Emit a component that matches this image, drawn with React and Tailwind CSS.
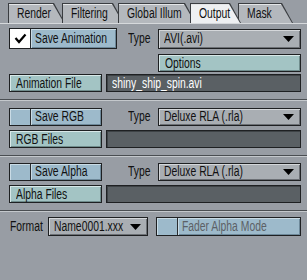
import React from "react";

const font = { fontFamily: '"Liberation Sans", Arial, sans-serif' };

function T({ children }) {
  return <span className="inline-block origin-left scale-x-[0.74] whitespace-nowrap">{children}</span>;
}

function Tab({ label, className, active }) {
  return (
    <div className={`relative h-[20px] shrink-0 ${className} ${active ? "z-10" : ""}`}>
      <div className="absolute inset-0 bg-[#3a3d41] [clip-path:polygon(0_0,calc(100%-11px)_0,100%_100%,0_100%)]" />
      <div
        className={`absolute left-[1px] top-[1px] right-[1px] bottom-0 ${
          active ? "bg-[#eef0f2]" : "bg-[#b4b8bd]"
        } [clip-path:polygon(0_0,calc(100%-11px)_0,100%_100%,0_100%)]`}
      />
      <div className="absolute left-[1px] top-[1px] right-[12px] h-[1px] bg-[#e4e6e8]" />
      <div className="relative pl-[9px] pt-[1px] text-[14px] leading-[19px] text-[#111]">
        <T>{label}</T>
      </div>
    </div>
  );
}

function Sep() {
  return (
    <div className="flex flex-col">
      <div className="h-[1px] bg-[#4a4e52]" />
      <div className="h-[1px] bg-[#c4c8cc]" />
    </div>
  );
}

function TealBtn({ children, className = "" }) {
  return (
    <div
      className={`flex items-center border border-[#1e2022] bg-[#a3c4c4] shadow-[inset_1px_1px_0_#d8e8e8,inset_-1px_-1px_0_#6f8c8c] pl-[6px] text-[14px] text-[#111] ${className}`}
    >
      <T>{children}</T>
    </div>
  );
}

function Check({ label, checked, className = "", dim }) {
  return (
    <div className={`flex border border-[#1e2022] bg-[#9dbacb] ${className}`}>
      <div
        className={`w-[21px] shrink-0 border-r border-[#2a2d30] flex items-center justify-center ${
          checked ? "bg-white" : "bg-[#9dbacb] shadow-[inset_1px_1px_0_#c9dbe5]"
        }`}
      >
        {checked && (
          <svg width="13" height="11" viewBox="0 0 13 11">
            <path d="M1.5 5 L5 9 L11.5 1.5" fill="none" stroke="#000" strokeWidth="2.2" />
          </svg>
        )}
      </div>
      <div
        className={`flex-1 min-w-0 pl-[4px] flex items-center text-[14px] shadow-[inset_1px_1px_0_#c9dbe5,inset_-1px_-1px_0_#6d8899] ${
          dim ? "text-[#5c6166]" : "text-[#111]"
        }`}
      >
        <T>{label}</T>
      </div>
    </div>
  );
}

function Select({ value, className = "" }) {
  return (
    <div
      className={`flex items-center border border-[#1e2022] bg-[#a9aeb3] shadow-[inset_1px_1px_0_#d4d7da,inset_-1px_-1px_0_#6c7075] pl-[5px] pr-[6px] text-[14px] text-[#111] ${className}`}
    >
      <div className="flex-1 min-w-0 flex items-center">
        <T>{value}</T>
      </div>
      <svg width="11" height="6" viewBox="0 0 11 6" className="shrink-0">
        <path d="M0 0 H11 L5.5 6 Z" fill="#000" />
      </svg>
    </div>
  );
}

function Field({ value, className = "" }) {
  return (
    <div
      className={`flex items-center border border-[#1e2022] bg-[#5a6064] shadow-[inset_1px_1px_0_#3e4346] pl-[5px] text-[14px] text-white ${className}`}
    >
      <T>{value}</T>
    </div>
  );
}

function TypeRow({ check, value, h }) {
  return (
    <div className="flex items-center">
      {check}
      <span className="ml-auto w-[30px] text-[14px] text-[#111]">
        <T>Type</T>
      </span>
      <Select value={value} className={`w-[143px] ${h}`} />
    </div>
  );
}

export default function App() {
  return (
    <div className="w-[307px] h-[280px] bg-[#989da4] overflow-hidden" style={font}>
      {/* tabs */}
      <div className="relative h-[24px]">
        <div className="flex pt-[3px] pl-[8px]">
          <Tab label="Render" className="w-[57px]" />
          <Tab label="Filtering" className="w-[62px] ml-[-3px]" />
          <Tab label="Global Illum" className="w-[78px] ml-[-6px]" />
          <Tab label="Output" className="w-[51px] ml-[-6px]" active />
          <Tab label="Mask" className="w-[55px] ml-[-3px]" />
        </div>
        <div className="absolute left-0 right-0 top-[23px] h-[1px] bg-[#d6d9dc]" />
      </div>

      <div className="flex flex-col pl-[9px] pr-[6px]">
        <div className="mt-[4px]">
          <TypeRow
            check={<Check label="Save Animation" checked className="w-[108px] h-[21px]" />}
            value="AVI(.avi)"
            h="h-[20px]"
          />
        </div>
        <div className="mt-[5px] flex">
          <TealBtn className="ml-auto w-[143px] h-[18px]">Options</TealBtn>
        </div>
        <div className="mt-[2px] flex gap-[4px]">
          <TealBtn className="w-[93px] h-[18px]">Animation File</TealBtn>
          <Field value="shiny_ship_spin.avi" className="flex-1 h-[18px]" />
        </div>
      </div>

      <div className="mt-[7px]">
        <Sep />
      </div>

      <div className="flex flex-col pl-[9px] pr-[6px]">
        <div className="mt-[5px]">
          <TypeRow
            check={<Check label="Save RGB" className="w-[93px] h-[18px]" />}
            value="Deluxe RLA (.rla)"
            h="h-[18px]"
          />
        </div>
        <div className="mt-[3px] flex gap-[4px]">
          <TealBtn className="w-[93px] h-[18px]">RGB Files</TealBtn>
          <Field value="" className="flex-1 h-[18px]" />
        </div>
      </div>

      <div className="mt-[7px]">
        <Sep />
      </div>

      <div className="flex flex-col pl-[9px] pr-[6px]">
        <div className="mt-[4px]">
          <TypeRow
            check={<Check label="Save Alpha" className="w-[93px] h-[18px]" />}
            value="Deluxe RLA (.rla)"
            h="h-[18px]"
          />
        </div>
        <div className="mt-[3px] flex gap-[4px]">
          <TealBtn className="w-[93px] h-[18px]">Alpha Files</TealBtn>
          <Field value="" className="flex-1 h-[18px]" />
        </div>
      </div>

      <div className="mt-[7px]">
        <Sep />
      </div>

      <div className="mt-[4px] flex items-center pl-[10px] pr-[6px]">
        <span className="w-[38px] text-[14px] text-[#111]">
          <T>Format</T>
        </span>
        <Select value="Name0001.xxx" className="w-[100px] h-[19px]" />
        <Check label="Fader Alpha Mode" dim className="ml-auto w-[145px] h-[19px]" />
      </div>
    </div>
  );
}
